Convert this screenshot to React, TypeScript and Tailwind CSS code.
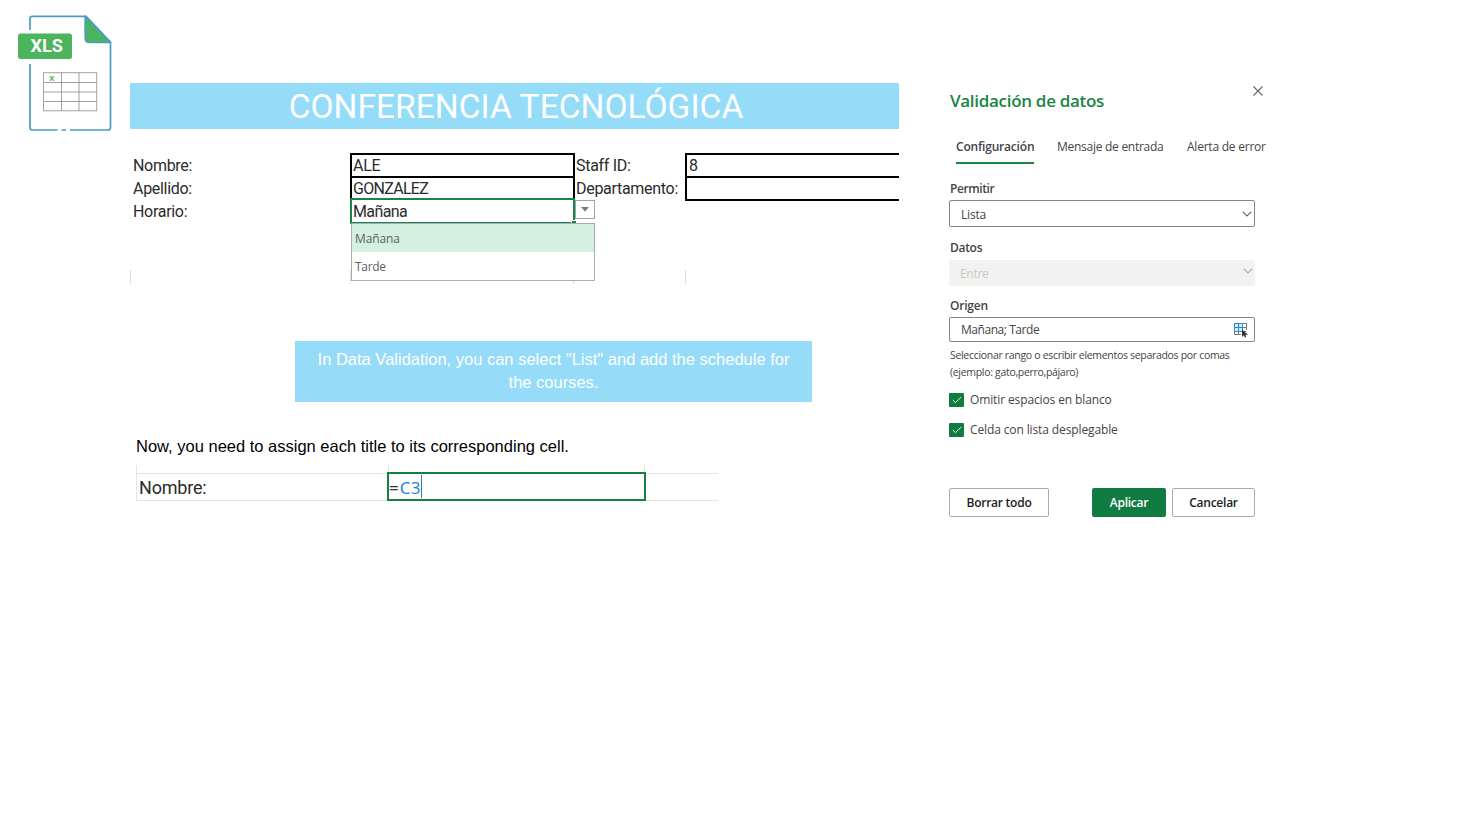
import React from 'react';

function FileIcon() {
  return (
    <svg width="130" height="145" viewBox="0 0 130 145" fill="none">
      <path d="M30 30V18.5Q30 16.3 32.2 16.3H86L110.5 42V127.500Q110.500 130 108 130H70" stroke="#4c9dc0" strokeWidth="1.7" />
      <path d="M30 64V127.500Q30 130 32.500 130H57.500M61.500 130H66" stroke="#4c9dc0" strokeWidth="1.7" />
      <path d="M85.200 16.300L110.500 42.500H89.500Q85.200 42.500 85.200 38Z" fill="#4db45e" stroke="#4c9dc0" strokeWidth="1.7" strokeLinejoin="round" />
      <rect x="18" y="33.500" width="54" height="25.500" rx="2.500" fill="#4db45e" />
      <text x="30.500" y="52.300" textLength="32.500" lengthAdjust="spacingAndGlyphs" fontFamily="Roboto, sans-serif" fontWeight="700" fontSize="17.500" fill="#fff">XLS</text>
      <path d="M43.500 72.700H97M43.500 82.500H97M43.500 92H97M43.500 101.500H97M43.500 110.800H97M43.500 72.500V111M61.500 72.500V111M79 72.500V111M96.700 72.500V111" stroke="#8c8c8c" strokeWidth="0.800" />
      <text x="49.300" y="80.800" fontFamily="Roboto, sans-serif" fontWeight="700" fontSize="8" fill="#4db45e">X</text>
    </svg>
  );
}

function Banner() {
  return (
    <h1 className="flex h-[46px] items-center justify-center bg-[#95dcf8] pt-[3px] pl-[3px] font-['Roboto',sans-serif] text-[33.500px] text-white">
      <span className="whitespace-nowrap tracking-[0.030px]">CONFERENCIA TECNOLÓGICA</span>
    </h1>
  );
}

function StaffForm() {
  return (
    <div className="relative mt-6 h-[131px] font-['Roboto',sans-serif] text-base leading-[23px] tracking-[-0.3px] text-[#2b2b2b]">
      <div className="grid h-[48px] grid-cols-[220px_225px_110px_214px] grid-rows-[23px_25px]">
        <div className="pl-[3px] pt-px">Nombre:</div>
        <div className="border-2 border-b-0 border-black pl-px leading-[21px]">ALE</div>
        <div className="pl-px pt-px">Staff ID:</div>
        <div className="border-2 border-r-0 border-b-0 border-black pl-[2px] leading-[21px]">8</div>
        <div className="pl-[3px] pt-px">Apellido:</div>
        <div className="border-2 border-b-0 border-black pl-px leading-[21px] tracking-[-0.700px]">GONZALEZ</div>
        <div className="pl-px pt-px">Departamento:</div>
        <div className="border-2 border-r-0 border-black" />
      </div>
      <div className="-mt-[3px] flex h-[26px]">
        <div className="w-[220px] pl-[3px] pt-[2px]">Horario:</div>
        <div className="relative w-[225px] border-2 border-[#1a8449] pl-px leading-[23px] tracking-[-0.600px]">
          Mañana
          <span className="absolute -right-[3px] -bottom-[3px] h-[5px] w-[5px] border-t border-l border-white bg-[#1a8449]" />
        </div>
        <div className="mt-[2px] flex h-[19px] w-[20px] items-center justify-center border border-[#a3a3a3] bg-white">
          <svg width="8" height="5" viewBox="0 0 8 5"><path d="M0 0H8L4 4.500Z" fill="#777" /></svg>
        </div>
      </div>
      <div className="absolute bottom-0 left-0 flex h-[14px] w-full">
        <div className="w-[220px] border-l border-[#dedede]" />
        <div className="w-[223px] border-l border-[#dedede]" />
        <div className="w-[112px] border-l border-[#dedede]" />
        <div className="border-l border-[#dedede]" />
      </div>
      <ul className="absolute top-[70px] left-[221px] h-[58px] w-[244px] border border-[#a9adb1] bg-white font-['Open_Sans',sans-serif] text-xs leading-[28px] tracking-[-0.100px] text-[#606060]">
        <li className="h-[28px] bg-[#d3f0e0] pl-[3px] pt-px">Mañana</li>
        <li className="h-[28px] pl-[3px] pt-px tracking-[-0.300px]">Tarde</li>
      </ul>
    </div>
  );
}

function FormulaRow() {
  return (
    <div className="mt-[7px] ml-[6px] h-[37px] w-[582px] font-['Roboto',sans-serif]">
      <div className="flex h-[9px] border-b border-[#e4e4e4]">
        <div className="w-[252px] border-l border-[#e4e4e4]" />
        <div className="w-[256px] border-l border-[#e4e4e4]" />
        <div className="border-l border-[#e4e4e4]" />
      </div>
      <div className="flex h-[27px] border-b border-l border-[#e4e4e4]">
        <div className="w-[250px] pl-[2px] text-[18px] leading-[28px] tracking-[-0.200px] text-[#2b2b2b]">Nombre:</div>
        <div className="-mt-[2px] flex h-[29px] w-[259px] items-center border-2 border-[#15803f] font-['Open_Sans',sans-serif] text-[17px] text-[#333]">
          <span className="pt-[2px]">=</span><span className="pt-[2px] pl-px tracking-[0.400px] text-[#2180d0]">C3</span>
          <span className="h-[23px] w-px bg-[#2180d0]" />
        </div>
      </div>
    </div>
  );
}

function Chevron({ color }: { color: string }) {
  return (
    <svg width="10" height="6" viewBox="0 0 10 6" fill="none"><path d="M0.700 0.700L5 5L9.300 0.700" stroke={color} strokeWidth="1.100" /></svg>
  );
}

function RangeIcon() {
  return (
    <svg width="16" height="16" viewBox="0 0 16 16" fill="none">
      <path d="M1.500 1.500H9.500V9.500H1.500Z" fill="#d9ecfa" />
      <path d="M1.500 9.500V12.500H8M13.500 1.500V8M10 1.500H13.500M5.500 9.500V12.500M9.500 5.500H13.500M9.500 9.500H13.500" stroke="#777" />
      <path d="M1.500 1.500H9.500V9.500H1.500ZM5.500 1.500V9.500M1.500 5.500H9.500" stroke="#2b88d8" />
      <path d="M9 7.500V15L10.700 13.300L12 15.500L13.200 14.800L12.300 12.700H15Z" fill="#333" />
    </svg>
  );
}

function CheckRow({ label }: { label: string }) {
  return (
    <label className="flex h-[15px] items-center gap-[6px] text-xs tracking-[-0.120px]">
      <span className="flex h-[14px] w-[15px] items-center justify-center rounded-[1px] bg-[#107c41]">
        <svg width="10" height="8" viewBox="0 0 10 8" fill="none"><path d="M0.800 4L3.500 6.700L9.200 1" stroke="#fff" strokeWidth="0.900" /></svg>
      </span>
      <span className="whitespace-nowrap pt-px">{label}</span>
    </label>
  );
}

function ValidationPanel() {
  return (
    <section className="ml-[50px] w-[325px] pt-[83px] font-['Open_Sans',sans-serif] text-xs text-[#444]">
      <header className="flex h-[36px] w-[314px] items-center justify-between">
        <h2 className="whitespace-nowrap pl-px text-[17px] font-semibold tracking-[-0.300px] text-[#188544]">Validación de datos</h2>
        <svg className="mb-[20px] h-[10px] w-[10px]" viewBox="0 0 10 10"><path d="M0.500 0.500L9.500 9.500M9.500 0.500L0.500 9.500" stroke="#666" strokeWidth="1.100" /></svg>
      </header>
      <nav className="mt-[19px] ml-[7px] flex h-[26px] whitespace-nowrap leading-[17px]">
        <div className="mr-[23px] w-[78px] border-b-2 border-[#188544] font-semibold tracking-[-0.200px]">Configuración</div>
        <div className="w-[130px] tracking-[-0.270px]">Mensaje de entrada</div>
        <div className="tracking-[-0.230px]">Alerta de error</div>
      </nav>
      <div className="mt-[16px] h-4 pl-px font-semibold leading-[18px] tracking-[-0.400px]">Permitir</div>
      <div className="mt-[4px] flex h-[27px] w-[306px] items-center justify-between rounded-[2px] border border-[#858585] pl-[11px] pr-[2px]">
        <span className="pt-[3px] tracking-[-0.200px]">Lista</span><Chevron color="#666" />
      </div>
      <div className="mt-[12px] h-4 pl-px font-semibold leading-[18px] tracking-[-0.300px]">Datos</div>
      <div className="mt-[5px] flex h-[26px] w-[306px] items-center justify-between rounded-[2px] bg-[#f3f2f1] pl-[11px] pr-[2px] text-[#c8c6c4]">
        <span className="pt-[2px] tracking-[-0.300px]">Entre</span><span className="pb-[4px]"><Chevron color="#aaa" /></span>
      </div>
      <div className="mt-[12px] h-4 pl-px font-semibold leading-4 tracking-[-0.200px]">Origen</div>
      <div className="mt-[3px] flex h-[25px] w-[306px] items-center justify-between rounded-[2px] border border-[#858585] pl-[11px] pr-[5px]">
        <span className="pt-px tracking-[-0.450px]">Mañana; Tarde</span><RangeIcon />
      </div>
      <p className="mt-[5px] whitespace-nowrap pl-px text-[10.500px] leading-[17px] tracking-[-0.310px]">Seleccionar rango o escribir elementos separados por comas<br />(ejemplo: gato,perro,pájaro)</p>
      <div className="mt-[11px] flex flex-col gap-[15px]">
        <CheckRow label="Omitir espacios en blanco" />
        <CheckRow label="Celda con lista desplegable" />
      </div>
      <div className="mt-[51px] flex h-[29px] w-[306px] font-semibold tracking-[-0.250px] text-[#222]">
        <button className="h-full w-[100px] rounded-[2px] border border-[#aaa]">Borrar todo</button>
        <button className="ml-[43px] h-full w-[74px] rounded-[2px] bg-[#107c41] text-white">Aplicar</button>
        <button className="ml-[6px] h-full w-[83px] rounded-[2px] border border-[#aaa]">Cancelar</button>
      </div>
    </section>
  );
}

export default function App() {
  return (
    <main className="flex h-[832px] w-[1472px] items-start overflow-hidden bg-white">
      <div className="w-[130px] shrink-0"><FileIcon /></div>
      <div className="w-[769px] shrink-0 pt-[83px]">
        <Banner />
        <StaffForm />
        <p className="mt-[57px] ml-[165px] h-[61px] w-[517px] bg-[#96dbf8] pt-[7px] text-center font-['Liberation_Sans',sans-serif] text-[16.500px] leading-[23px] text-white">
          In Data Validation, you can select "List" and add the schedule for<br />the courses.
        </p>
        <p className="mt-[33px] ml-[6px] h-[23px] whitespace-nowrap font-['Liberation_Sans',sans-serif] text-[16.500px] leading-[23px] text-black">Now, you need to assign each title to its corresponding cell.</p>
        <FormulaRow />
      </div>
      <ValidationPanel />
    </main>
  );
}
